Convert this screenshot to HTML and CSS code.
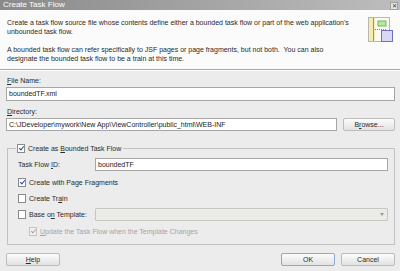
FILE: index.html
```html
<!DOCTYPE html>
<html>
<head>
<meta charset="utf-8">
<link rel="stylesheet" href="styles.css">
</head>
<body>
<div class="dialog">
  <div class="title">
    <span class="title-text">Create Task Flow</span>
    <span class="close">&#x2715;</span>
  </div>
  <div class="header">
    <div class="intro">
      <p>Create a task flow source file whose contents define either a bounded task flow or part of the web application's<br>unbounded task flow.</p>
      <p>A bounded task flow can refer specifically to JSF pages or page fragments, but not both.&nbsp; You can also<br>designate the bounded task flow to be a train at this time.</p>
    </div>
    <svg class="icon" width="26" height="27" viewBox="0 0 26 27">
      <rect x="0.5" y="0.5" width="21" height="24" fill="#fbfbf4" stroke="#b8b8b0"/>
      <rect x="1" y="1" width="6" height="23" fill="#f4ecb0"/>
      <line x1="5.5" y1="1" x2="5.5" y2="24" stroke="#e08030" stroke-width="1"/>
      <rect x="10" y="4" width="8" height="5" fill="#b8e8a0" stroke="#70b858"/>
      <line x1="7" y1="12.5" x2="19" y2="12.5" stroke="#5a8ad8" stroke-width="1" stroke-dasharray="1 1"/>
      <rect x="13.5" y="13.5" width="11" height="11" fill="#d8d8f4" stroke="#7070c8"/>
    </svg>
  </div>

  <div class="content">
    <label class="lbl"><u>F</u>ile Name:</label>
    <div class="field full">boundedTF.xml</div>

    <label class="lbl"><u>D</u>irectory:</label>
    <div class="dir-row">
      <div class="field dir">C:\JDeveloper\mywork\New App\ViewController\public_html\WEB-INF</div>
      <button class="btn browse">B<u>r</u>owse...</button>
    </div>

    <div class="group">
      <div class="legend">
        <span class="cb checked"></span>
        <span>Create as <u>B</u>ounded Task Flow</span>
      </div>
      <div class="row">
        <span class="row-label">Task Flow <u>I</u>D:</span>
        <div class="field inner">boundedTF</div>
      </div>
      <div class="row">
        <span class="cb checked"></span>
        <span>Create with Page Fra<u>g</u>ments</span>
      </div>
      <div class="row">
        <span class="cb"></span>
        <span>Create Tr<u>a</u>in</span>
      </div>
      <div class="row">
        <span class="cb"></span>
        <span class="row-label short">Base o<u>n</u> Template:</span>
        <div class="combo"><span class="arrow"></span></div>
      </div>
      <div class="row sub">
        <span class="cb checked disabled"></span>
        <span class="disabled-text"><u>U</u>pdate the Task Flow when the Template Changes</span>
      </div>
    </div>

    <div class="buttons">
      <button class="btn"><u>H</u>elp</button>
      <div class="spacer"></div>
      <button class="btn ok">OK</button>
      <button class="btn">Cancel</button>
    </div>
  </div>
</div>
</body>
</html>
```

FILE: styles.css
```css
* { box-sizing: border-box; }
html, body { margin: 0; padding: 0; }
body {
  width: 400px;
  height: 271px;
  overflow: hidden;
  background: #ececec;
  font-family: "Liberation Sans", Arial, sans-serif;
  font-size: 7px;
  color: #2a2a2a;
}
.dialog { width: 400px; height: 271px; display: flex; flex-direction: column; }

.title {
  height: 10px;
  background: linear-gradient(to right, #8a8a8a, #bdbdbd);
  display: flex;
  align-items: center;
  justify-content: space-between;
  padding: 0 2px 0 3px;
}
.title-text { color: #fff; font-size: 8px; line-height: 10px; }
.close {
  width: 8px; height: 8px;
  background: #e4e4e4;
  border: 1px solid #a0a0a0;
  color: #333;
  font-size: 6px;
  line-height: 6px;
  text-align: center;
  margin-top: 1px;
}

.header {
  height: 60px;
  background: #fbfbfb;
  border-bottom: 1px solid #a9a9a2;
  box-shadow: 0 1px 0 #fff;
  display: flex;
  justify-content: space-between;
  padding: 8px 6px 0 7px;
}
.intro p { margin: 0 0 9px 0; line-height: 9px; }
.icon { margin-top: -1px; }

.content { padding: 0 5px 0 6px; display: flex; flex-direction: column; }
.lbl { display: block; line-height: 9px; margin-top: 6px; margin-bottom: 2px; padding-left: 1px; }
.field {
  height: 14px;
  background: #fff;
  border: 1px solid #a6a6a6;
  line-height: 12px;
  padding-left: 2px;
  color: #222;
  white-space: nowrap;
  overflow: hidden;
}
.full { width: 389px; }
.dir-row { display: flex; gap: 6px; }
.dir { width: 331px; height: 13px; line-height: 11px; }
.btn {
  font: inherit;
  color: #2a2a2a;
  height: 13px;
  width: 54px;
  padding: 0;
  border: 1px solid #bdbdbd;
  border-radius: 2px;
  background: linear-gradient(#fcfcfc, #e2e2e2);
  line-height: 11px;
}
.browse { width: 52px; }

.group {
  margin-top: 17px;
  margin-left: 1px;
  width: 388px;
  height: 97px;
  border: 1px solid #c2c2c2;
  padding: 0 6px 0 10px;
  display: flex;
  flex-direction: column;
}
.legend {
  display: flex;
  align-items: center;
  gap: 3px;
  margin-top: -5px;
  margin-left: -2px;
  padding: 0 2px 0 1px;
  background: #ececec;
  width: fit-content;
  height: 9px;
  line-height: 9px;
}
.cb {
  width: 8px; height: 9px;
  border: 1px solid #8a8a8a;
  background: #fff;
  position: relative;
  flex: none;
}
.cb.checked::after {
  content: "";
  position: absolute;
  left: 2px; top: 0px;
  width: 2px; height: 4px;
  border-right: 1.3px solid #2450a8;
  border-bottom: 1.3px solid #2450a8;
  transform: rotate(40deg);
}
.cb.disabled { border-color: #c4c4c4; background: #f2f2f2; }
.cb.disabled::after { border-color: #a8a8a8; }

.row { display: flex; align-items: center; gap: 3px; height: 16px; line-height: 9px; }
.row:nth-child(2) { margin-top: 5px; height: 13px; }
.row:nth-child(3) { margin-top: 3px; }
.row-label { width: 74px; flex: none; }
.row-label.short { width: 63px; }
.inner { width: 296px; height: 13px; line-height: 11px; }
.combo {
  width: 296px; height: 13px;
  border: 1px solid #c8c8c0;
  border-radius: 1px;
  background: #ebebea;
  position: relative;
}
.arrow {
  position: absolute;
  right: 3px; top: 4px;
  border-left: 2.5px solid transparent;
  border-right: 2.5px solid transparent;
  border-top: 3px solid #9a9a9a;
}
.row.sub { padding-left: 11px; margin-top: 1px; }
.disabled-text { color: #a4a4a4; }

.buttons { display: flex; gap: 6px; margin-top: 8px; }
.spacer { flex: 1; }
.ok { border-color: #8aaad4; }
u { text-decoration: underline; text-underline-offset: 1px; }
```
